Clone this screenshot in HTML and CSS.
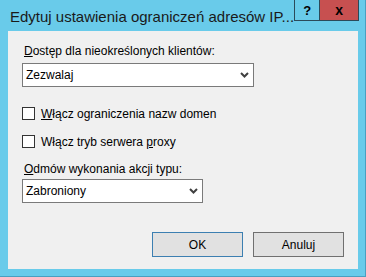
FILE: index.html
```html
<!DOCTYPE html>
<html>
<head>
<meta charset="utf-8">
<link rel="stylesheet" href="styles.css">
</head>
<body>
<div class="window">
  <div class="titlebar">
    <div class="title">Edytuj ustawienia ograniczeń adresów IP...</div>
    <div class="tbtn help">?</div>
    <div class="tbtn close">x</div>
  </div>
  <div class="client">
    <div class="label label-first"><u>D</u>ostęp dla nieokreślonych klientów:</div>
    <div class="select select-wide">
      <span class="value">Zezwalaj</span>
      <svg class="chev" width="9" height="6" viewBox="0 0 9 6"><path d="M1 1 L4.5 4.5 L8 1" fill="none" stroke="#404040" stroke-width="2"/></svg>
    </div>
    <div class="check check-first"><span class="box"></span><span><u>W</u>łącz ograniczenia nazw domen</span></div>
    <div class="check"><span class="box"></span><span>Włącz tryb serwera <u>p</u>roxy</span></div>
    <div class="label label-second"><u>O</u>dmów wykonania akcji typu:</div>
    <div class="select select-narrow">
      <span class="value">Zabroniony</span>
      <svg class="chev" width="9" height="6" viewBox="0 0 9 6"><path d="M1 1 L4.5 4.5 L8 1" fill="none" stroke="#404040" stroke-width="2"/></svg>
    </div>
    <div class="buttons">
      <div class="btn default">OK</div>
      <div class="btn">Anuluj</div>
    </div>
  </div>
</div>
</body>
</html>
```
FILE: styles.css
```css
html, body {
  margin: 0;
  padding: 0;
}
body {
  font-family: "Liberation Sans", Arial, sans-serif;
  font-size: 12px;
  color: #000;
}
.window {
  width: 366px;
  height: 277px;
  box-sizing: border-box;
  background: #69cbea;
  border-right: 1px solid #4a9fc0;
  border-bottom: 1px solid #4a9fc0;
  display: flex;
  flex-direction: column;
}
.titlebar {
  height: 31px;
  display: flex;
  align-items: flex-start;
}
.title {
  flex: 1;
  font-size: 15px;
  padding-left: 10px;
  padding-top: 8px;
  color: #1a1a1a;
  white-space: nowrap;
}
.tbtn {
  height: 21px;
  box-sizing: border-box;
  border: 1px solid #2b4a5a;
  border-top: none;
  display: flex;
  align-items: center;
  justify-content: center;
  font-weight: bold;
  font-size: 13px;
}
.help {
  width: 29px;
  background: #69cbea;
  border-right: none;
}
.close {
  width: 46px;
  margin-right: 6px;
  background: #c75050;
  font-size: 14px;
}
.client {
  margin: 0 7px 7px 8px;
  flex: 1;
  background: #f0f0f0;
  padding: 0 14px;
  display: flex;
  flex-direction: column;
  align-items: flex-start;
}
.label {
  margin-left: 2px;
  line-height: 15px;
}
.label-first { margin-top: 13px; margin-bottom: 4px; }
.label-second { margin-top: 13px; margin-bottom: 2px; }
.select {
  height: 24px;
  box-sizing: border-box;
  border: 1px solid #7a7a7a;
  background: #fff;
  display: flex;
  align-items: center;
  justify-content: space-between;
  padding: 0 4px 0 3px;
}
.select-wide { width: 232px; }
.select-narrow { width: 181px; }
.check {
  display: flex;
  align-items: center;
  gap: 6px;
  height: 15px;
  margin-top: 13px;
}
.check-first { margin-top: 19px; }
.box {
  width: 13px;
  height: 13px;
  box-sizing: border-box;
  border: 1px solid #333;
  background: #fff;
}
.buttons {
  align-self: flex-end;
  margin-top: 29px;
  display: flex;
  gap: 10px;
}
.btn {
  width: 91px;
  height: 25px;
  box-sizing: border-box;
  border: 1px solid #707070;
  background: #e1e1e1;
  display: flex;
  align-items: center;
  justify-content: center;
}
.btn.default {
  border-color: #3c7fb1;
}
```
